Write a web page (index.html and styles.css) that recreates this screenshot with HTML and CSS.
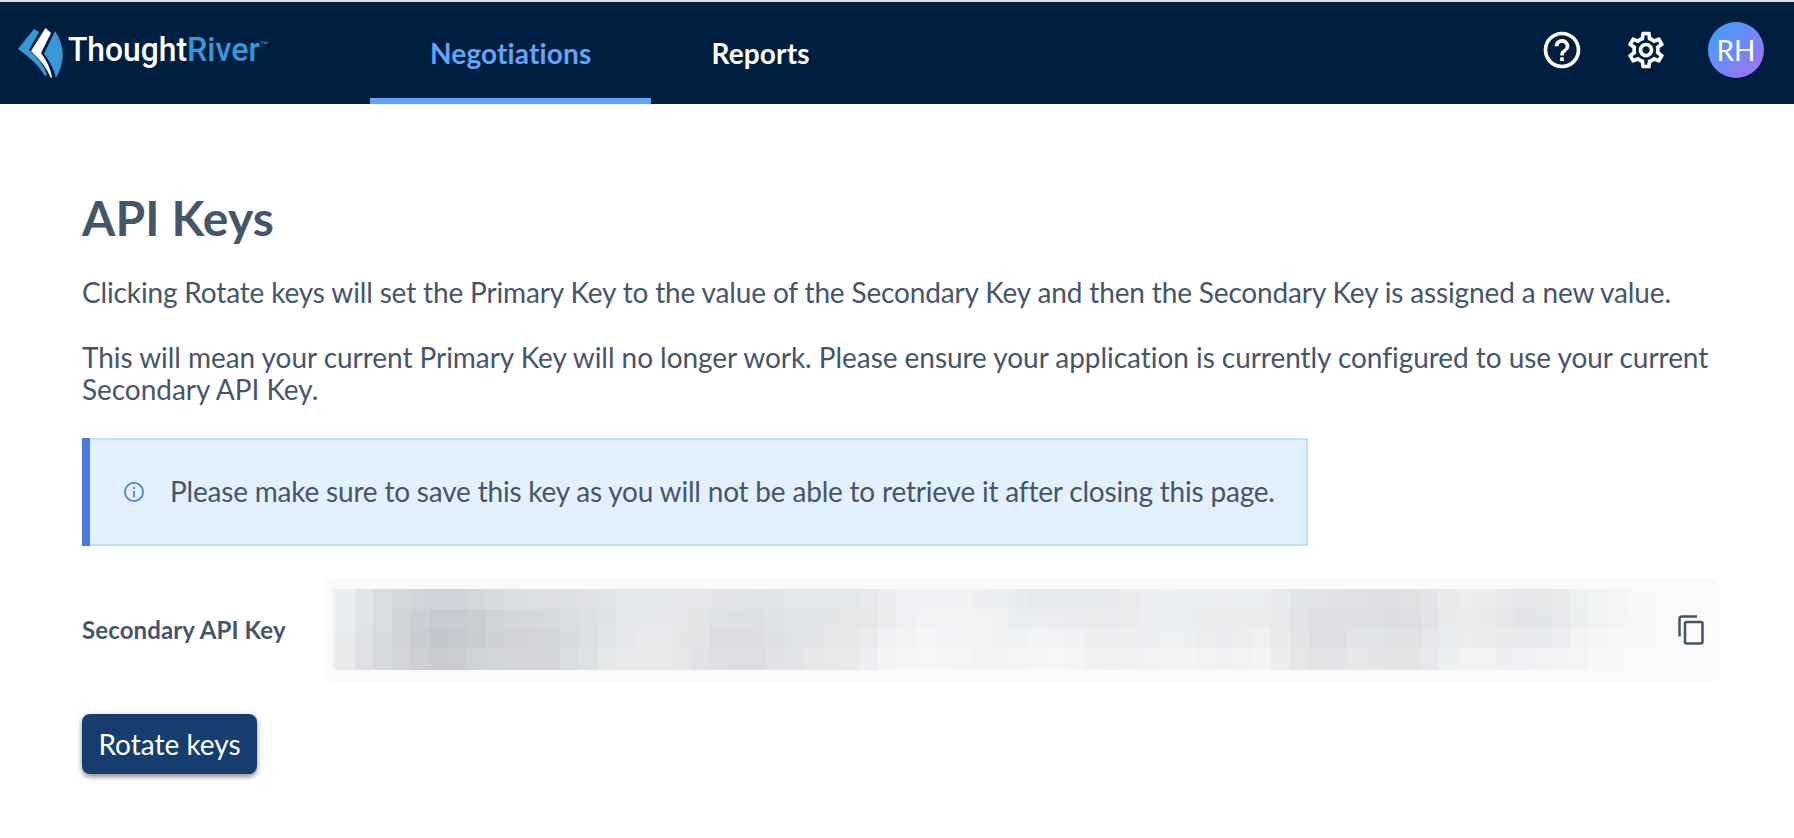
FILE: index.html
```html
<!DOCTYPE html>
<html lang="en">
<head>
<meta charset="utf-8">
<title>API Keys</title>
<link rel="stylesheet" href="styles.css">
</head>
<body>
<header class="topbar">
  <a class="logo">
    <svg width="260" height="60" viewBox="0 0 260 60">
      <path fill="#3898d6" d="M18 25 34 5 39 8 29 26Q43 38 47 51L45 52Q38 39 18 25Z"/>
      <path fill="#fff" d="M31 27 45.500 4 51 9 41 29Q50 41 52 53L51 54Q45 40 31 27Z"/>
      <path fill="#3898d6" d="M44 30 55 7Q70 29 56 54Q53 41 44 30Z"/>
      <text class="wordmark" x="68" y="37" textLength="119" lengthAdjust="spacingAndGlyphs">Thought</text>
      <text class="wordmark river" x="187" y="37" textLength="73" lengthAdjust="spacingAndGlyphs">River</text>
      <text class="tm" x="260" y="24" textLength="9" lengthAdjust="spacingAndGlyphs">™</text>
    </svg>
  </a>
  <nav class="tabs">
    <a class="tab active">Negotiations</a>
    <a class="tab">Reports</a>
  </nav>
  <div class="tools">
    <svg class="tool" viewBox="0 0 24 24"><path d="M11 18h2v-2h-2v2zm1-16C6.48 2 2 6.48 2 12s4.48 10 10 10 10-4.480 10-10S17.520 2 12 2zm0 18c-4.410 0-8-3.590-8-8s3.590-8 8-8 8 3.590 8 8-3.590 8-8 8zm0-14c-2.210 0-4 1.790-4 4h2c0-1.100.9-2 2-2s2 .9 2 2c0 2-3 1.750-3 5h2c0-2.250 3-2.500 3-5 0-2.210-1.790-4-4-4z"/></svg>
    <svg class="tool" viewBox="0 0 24 24"><path d="M19.430 12.980c.04-.32.07-.64.07-.98s-.03-.66-.07-.98l2.110-1.650c.19-.15.24-.42.12-.64l-2-3.460c-.09-.16-.26-.25-.44-.25-.06 0-.12.010-.17.030l-2.490 1c-.52-.4-1.080-.73-1.690-.98l-.38-2.650C14.460 2.180 14.250 2 14 2h-4c-.25 0-.46.180-.49.420l-.38 2.650c-.61.250-1.170.590-1.690.980l-2.490-1c-.06-.02-.12-.03-.18-.03-.17 0-.34.090-.43.250l-2 3.460c-.13.220-.07.490.12.640l2.110 1.650c-.04.320-.07.650-.07.980s.03.660.07.980l-2.110 1.650c-.19.150-.24.420-.12.640l2 3.460c.09.160.26.250.44.250.06 0 .12-.01.17-.03l2.490-1c.52.400 1.080.730 1.690.980l.38 2.650c.03.240.24.420.49.420h4c.25 0 .46-.18.49-.42l.38-2.650c.61-.25 1.170-.59 1.690-.98l2.490 1c.06.020.12.030.18.030.17 0 .34-.09.43-.25l2-3.460c.12-.22.07-.49-.12-.64l-2.110-1.650zm-1.980-1.710c.04.310.05.520.05.730 0 .21-.02.430-.05.730l-.14 1.130.89.700 1.080.840-.7 1.210-1.270-.51-1.040-.42-.9.680c-.43.320-.84.560-1.250.730l-1.060.43-.16 1.130-.2 1.350h-1.400l-.19-1.350-.16-1.130-1.060-.43c-.43-.18-.83-.41-1.230-.71l-.91-.7-1.060.43-1.270.51-.7-1.210 1.080-.84.89-.7-.14-1.130c-.03-.31-.05-.54-.05-.74s.02-.43.05-.73l.14-1.130-.89-.7-1.080-.84.7-1.210 1.270.51 1.040.42.9-.68c.43-.32.84-.56 1.250-.73l1.060-.43.16-1.130.2-1.350h1.390l.19 1.350.16 1.130 1.060.43c.43.180.83.410 1.230.71l.91.700 1.060-.43 1.270-.51.7 1.210-1.070.85-.89.700.14 1.130zM12 8c-2.210 0-4 1.790-4 4s1.790 4 4 4 4-1.790 4-4-1.790-4-4-4zm0 6c-1.100 0-2-.9-2-2s.9-2 2-2 2 .9 2 2-.9 2-2 2z"/></svg>
    <span class="avatar">RH</span>
  </div>
</header>
<main class="page">
  <h1 class="title">API Keys</h1>
  <p class="copy lead">Clicking Rotate keys will set the Primary Key to the value of the Secondary Key and then the Secondary Key is assigned a new value.</p>
  <p class="copy">This will mean your current Primary Key will no longer work. Please ensure your application is currently configured to use your current Secondary API Key.</p>
  <div class="notice">
    <div class="notice-body">
      <svg class="info" viewBox="0 0 20 20"><circle cx="10" cy="10" r="9.100"/><path d="M10 9v6M10 5v2"/></svg>
      <span class="notice-text">Please make sure to save this key as you will not be able to retrieve it after closing this page.</span>
    </div>
  </div>
  <div class="key-row">
    <span class="key-label">Secondary API Key</span>
    <div class="key-box">
      <div class="mosaic" id="mosaic"></div>
      <svg class="copy-icon" width="26" height="30" viewBox="0 0 26 30"><path d="M1.500 21.500V4Q1.500 1.500 4 1.500H19"/><rect x="7" y="7" width="17.500" height="21.500" rx="1.500"/></svg>
    </div>
  </div>
  <button class="rotate">Rotate keys</button>
</main>
<script src="mosaic.js"></script>
</body>
</html>
```

FILE: styles.css
```css
* { box-sizing: border-box; }
body {
  margin: 0;
  min-height: 838px;
  background: #fff;
  color: #475569;
  font-family: Lato, "Liberation Sans", sans-serif;
  font-size: 28px;
  line-height: 32px;
  font-variant-ligatures: none;
}
.topbar {
  display: flex;
  height: 104px;
  border-top: 2px solid #e0e0e0;
  background: #001e40;
  color: #fff;
}
.logo { width: 370px; padding-top: 22px; }
.logo svg { display: block; overflow: visible; }
.wordmark { font: 500 33px Roboto, sans-serif; fill: #fff; }
.wordmark.river { fill: #3898d6; }
.tm { font: 9px Roboto, sans-serif; fill: #3898d6; }
.tabs { display: flex; }
.tab {
  padding: 35px 60px 0;
  border-bottom: 6px solid transparent;
  font-weight: 700;
  letter-spacing: 0.15px;
}
.tab.active { color: #60a5fa; border-color: #60a5fa; }
.tools {
  display: flex;
  align-items: center;
  margin: 0 30px 6px auto;
}
.tool { width: 44px; height: 44px; margin-right: 40px; fill: #fff; }
.avatar {
  width: 56px;
  height: 56px;
  border-radius: 50%;
  background: linear-gradient(135deg, #38a1ff, #a770ef);
  line-height: 56px;
  text-align: center;
}
.page { padding: 84px 74px 0 82px; }
.title { margin: 0 0 28px; font-size: 48px; line-height: 60px; font-weight: 700; letter-spacing: 0.15px; }
.copy { margin: 0 0 33px; letter-spacing: -0.046px; }
.copy.lead { letter-spacing: -0.148px; }
.notice {
  width: 1226px;
  height: 108px;
  border-left: 8px solid #4a78dc;
}
.notice-body {
  display: flex;
  align-items: center;
  height: 100%;
  padding-left: 34px;
  border: 2px solid #bfdfff;
  border-left: 0;
  background: #e3f1ff;
  white-space: nowrap;
}
.notice-text { padding-bottom: 2px; letter-spacing: -0.195px; }
.info { width: 20px; height: 20px; margin-right: 26px; fill: none; stroke: #5080e4; stroke-width: 1.800; }
.key-row { display: flex; align-items: center; margin: 32px 0; }
.key-label { width: 242px; font-size: 24px; font-weight: 700; letter-spacing: 0.12px; }
.key-box {
  display: flex;
  width: 1396px;
  height: 104px;
  padding: 11px 0 0 9px;
  border-radius: 8px;
  background: #fafafa;
}
.mosaic {
  display: grid;
  width: 1323px;
  height: 81px;
  grid-template-columns: 3px repeat(70, 18.710px) 1fr;
  grid-template-rows: 20px 20px 19px 22px;
}
.copy-icon { margin: 26px 0 0 22px; fill: none; stroke: #475569; stroke-width: 2.500; }
.rotate {
  display: block;
  width: 175px;
  height: 60px;
  padding: 0 0 1px;
  border: 0;
  border-radius: 8px;
  background: #153e6f;
  color: #fff;
  font: inherit;
  box-shadow: 0 3px 4px rgba(0,0,0,.35), 0 1px 8px rgba(0,0,0,.14);
}
```

FILE: mosaic.js
```javascript
// Colours of the masked key value, one row of cells per line.
const rows = [
  'eff3f5 e8edf0 e1e5e9 d9dce1 d4d9dc d0d4dd ced2dc cfd3dd d4d7db d7dadf dadde1 dbdee2 dcdee2 dde0e4 e0e2e8 e1e5e9 e3e8ea e4e8ed e3e8ea e6e7ea e6e5e9 e5e5e9 e1e6e7 e0e4e8 e2e6eb e3e7ed e2e7ea e5e6e8 e2e7ea e7e8eb ebecf0 eff0f5 eff1f6 eff1f5 eff1f3 edeff3 e9eef0 e6ebef e5e9ef e6eaef e6ebee e6ebed e9eaed eaebed edeef2 eaf0f3 e9eff1 e9eef1 ebedf2 eaeff3 ebedf1 e8e9ed e1e5e8 e1e3e7 e0e2e6 dfe1e5 dfe0e1 dddfe3 e0e1e2 e3e5ea e8eaeb ededee ebebec e7e8ea e4e6eb e5e7e9 e9eaec eef1f1 f1f4f2 f5f5f5 f6f9f7 f8f8f8',
  'eff3f5 e8edf0 e0e4e8 d9dce0 d0d3d7 cbced2 c6cad4 c7cbd4 cacdd1 cfd2d6 d3d6db d4d7dc d6d9de d9dce1 dce0e5 dee3e6 e4e6ea e3e8eb e6e7ec e5e6e7 e3e4e5 dde2e4 dedfe3 dce0e6 dfe3e8 e0e5e8 e1e6e8 e4e5e7 e5e6e7 e6e7e9 ebecee eff0f3 f1f2f4 f1f2f4 f1f2f4 f0f2f3 eef0f2 e8eef2 ecedf3 ecedf3 ebecf1 eaebed eaebee ebeced eceef2 eaeff3 e9eef2 ebeced ebecee ececee ececef e7e8ea e1e3e6 dedfe2 dedfe2 dfe0e4 dddfe1 dbdde0 dddfe3 e2e4e7 e9eaeb ebecee e9eaec e6e7e9 e2e4e8 e2e5ea e6e8eb edf0f1 f1f3f3 f5f5f5 f6f8f7 f8f8f8',
  'f1f1f2 e9eaec e1e2e6 d6dae1 d0d2d7 c9ccd4 c4c7d0 c4c8cf c9ccd0 ced1d5 d2d2d7 d3d3d9 d3d6db d8dbdf dadfe2 e0e5e8 e5e6eb e9e9eb e8e9ea e4e5e7 e2e3e5 dddde1 dcdce0 dddde1 dfe0e5 dfe4e8 e2e4e8 e4e6e8 e7e7e9 e9ebed eef0f3 f2f2f1 f3f5f8 f2f4f7 f1f3f5 f0f2f4 f0f1f3 eff2f3 f1f3f5 f0f2f4 eff1f3 eeeff1 edeef0 edeff0 eeeff2 eef0f2 edeff1 ecedef ebecef edeef0 eff0f2 e8e9eb e2e4e6 dddfe2 dddee1 e1e3e7 e0e3e7 e0e2e4 e0e2e4 e5e7e8 e9ecee ecedef ebecee e9eaec e7e8ea e9eaed edeef1 f2f2f2 f5f5f5 f7f8f7 f8f8f8 f8faf8',
  'f0f1f2 e9eaeb e1e1e5 d6dae0 d2d4da cdcfd3 cacccf cbcdd1 cfd2d6 d1d4d9 d3d5da d4d4da d4d6dc d8dde0 dde2e5 e5e6e8 e9e9ec eaeaeb e9eaeb e5e6e8 e0e2e6 dedfe2 dddee3 dddee2 e1e2e5 e3e4e8 e7e7e9 e7e8ea e9eaec edeef1 f2f3f3 f4f7f6 f7f7f7 f6f6f6 f5f5f5 f3f3f5 f2f4f6 f5f5f5 f5f6f6 f5f8f7 f3f5f7 f0f1f2 eef0f2 eff1f3 f0f2f4 f2f3f5 f2f4f5 f0f2f4 eff1f3 f1f2f4 f2f4f5 ececee e6e6e8 e2e3e5 e2e2e7 e6e5e7 e4e5e7 e2e4e6 e3e4e6 e7e8eb edf0f1 f0f3f2 f0f3f2 edeff2 eff0f3 f2f2f5 f2f4f6 f5f5f5 f8f8f8 f8f8f8 fafafa fbfbfb'
];
const mosaic = document.getElementById('mosaic');
for (const row of rows) {
  for (const color of row.split(' ')) {
    const cell = document.createElement('i');
    cell.style.background = '#' + color;
    mosaic.append(cell);
  }
}
```
